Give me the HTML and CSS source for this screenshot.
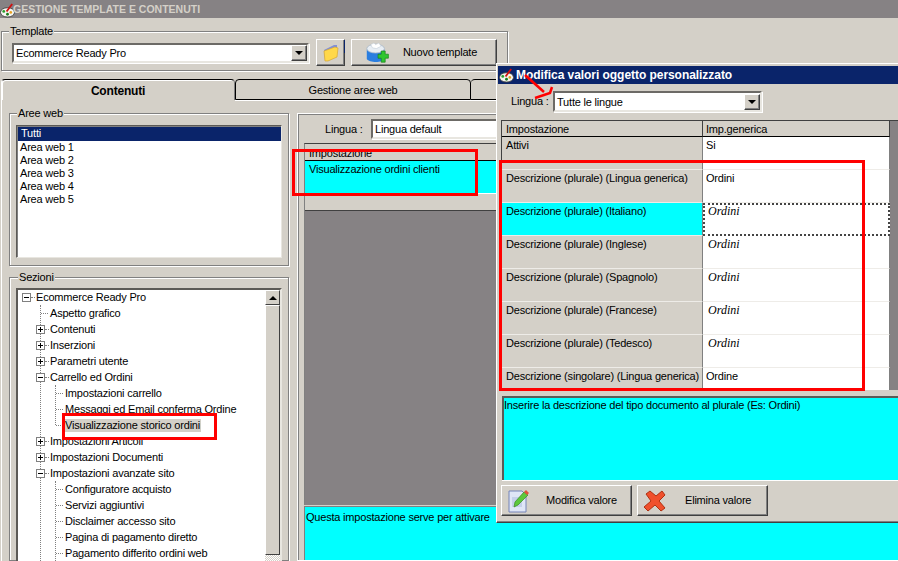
FILE: index.html
```html
<!DOCTYPE html>
<html lang="it">
<head>
<meta charset="utf-8">
<title>Gestione template e contenuti</title>
<link rel="stylesheet" href="styles.css">
</head>
<body>
<div class="main">
  <header class="app-title">
    <svg class="app-icon" viewBox="0 0 16 16"><ellipse cx="8" cy="10" rx="7.5" ry="5" fill="#f4f4f0" stroke="#444"/><circle cx="4" cy="9" r="1.5" fill="#2c9c2c"/><circle cx="8" cy="12" r="1.5" fill="#1c7c1c"/><circle cx="11.5" cy="10" r="1.4" fill="#e8a020"/><path d="M7 9 13 1" stroke="#d01010" stroke-width="2"/></svg>
    <span>GESTIONE TEMPLATE E CONTENUTI</span>
  </header>

  <fieldset class="group template-group">
    <legend>Template</legend>
    <div class="template-row">
      <div class="combo combo-template"><span class="combo-text">Ecommerce Ready Pro</span><span class="combo-btn"></span></div>
      <button class="btn btn-folder" type="button">
        <svg width="16" height="18" viewBox="0 0 16 18"><path d="M1 6 11 1h3v11L4 17H2z" fill="#7f8fd8"/><path d="M1 7 12 3l3 1-1 9-9 4H2z" fill="#ffd84a" stroke="#d8a830" stroke-width=".7"/></svg>
      </button>
      <button class="btn btn-new" type="button">
        <svg width="24" height="22" viewBox="0 0 30 27"><path d="M1 9v12c3 5 20 5 22 0V9z" fill="#2a7ee0"/><ellipse cx="12" cy="8" rx="11" ry="5.5" fill="#e8eef4" stroke="#a8b8c8"/><path d="M6 3l4-2 2 2 4-2 3 4-6 3-5-1z" fill="#fff" stroke="#b8c4d0" stroke-width=".6"/><path d="M15 15h4v-4h5v4h4v5h-4v5h-5v-5h-4z" fill="#2fc62f" stroke="#167a16" stroke-width=".8"/></svg>
        <span class="btn-label">Nuovo template</span>
      </button>
    </div>
  </fieldset>

  <nav class="tabs">
    <div class="tab tab-active">Contenuti</div>
    <div class="tab tab-second">Gestione aree web</div>
    <div class="tab tab-third"></div>
  </nav>

  <section class="page">
    <div class="left-col">
      <fieldset class="group areas-group">
        <legend>Aree web</legend>
        <ul class="listbox">
          <li class="list-selected">Tutti</li>
          <li>Area web 1</li>
          <li>Area web 2</li>
          <li>Area web 3</li>
          <li>Area web 4</li>
          <li>Area web 5</li>
        </ul>
      </fieldset>
      <fieldset class="group sections-group">
        <legend>Sezioni</legend>
        <div class="tree-box">
          <div class="tree">
            <div class="node root"><i class="exp minus"></i><i class="dash"></i><span>Ecommerce Ready Pro</span></div>
            <div class="branch">
              <div class="node"><i class="dash dash-long"></i><span>Aspetto grafico</span></div>
              <div class="node"><i class="exp plus"></i><i class="dash"></i><span>Contenuti</span></div>
              <div class="node"><i class="exp plus"></i><i class="dash"></i><span>Inserzioni</span></div>
              <div class="node"><i class="exp plus"></i><i class="dash"></i><span>Parametri utente</span></div>
              <div class="node"><i class="exp minus"></i><i class="dash"></i><span>Carrello ed Ordini</span></div>
              <div class="sub">
                <div class="node"><i class="dash dash-long"></i><span>Impostazioni carrello</span></div>
                <div class="node"><i class="dash dash-long"></i><span>Messaggi ed Email conferma Ordine</span></div>
                <div class="node node-last"><i class="dash dash-long"></i><span class="tree-selected">Visualizzazione storico ordini</span></div>
              </div>
              <div class="node"><i class="exp plus"></i><i class="dash"></i><span>Impostazioni Articoli</span></div>
              <div class="node"><i class="exp plus"></i><i class="dash"></i><span>Impostazioni Documenti</span></div>
              <div class="node"><i class="exp minus"></i><i class="dash"></i><span>Impostazioni avanzate sito</span></div>
              <div class="sub">
                <div class="node"><i class="dash dash-long"></i><span>Configuratore acquisto</span></div>
                <div class="node"><i class="dash dash-long"></i><span>Servizi aggiuntivi</span></div>
                <div class="node"><i class="dash dash-long"></i><span>Disclaimer accesso sito</span></div>
                <div class="node"><i class="dash dash-long"></i><span>Pagina di pagamento diretto</span></div>
                <div class="node"><i class="dash dash-long"></i><span>Pagamento differito ordini web</span></div>
              </div>
            </div>
          </div>
          <div class="scrollbar">
            <div class="scroll-up"></div>
            <div class="scroll-thumb"></div>
            <div class="scroll-track"></div>
          </div>
        </div>
      </fieldset>
    </div>

    <div class="right-panel">
      <div class="lang-row">
        <span class="lang-label">Lingua :</span>
        <div class="combo combo-lang"><span class="combo-text">Lingua default</span></div>
      </div>
      <div class="back-grid">
        <div class="back-head">Impostazione</div>
        <div class="back-row">Visualizzazione ordini clienti</div>
        <div class="back-empty"></div>
        <div class="back-dark"></div>
      </div>
      <div class="back-help">Questa impostazione serve per attivare</div>
    </div>
  </section>
</div>

<aside class="dialog">
  <div class="dlg-title">
    <svg class="app-icon" viewBox="0 0 16 16"><ellipse cx="8" cy="10" rx="7.5" ry="5" fill="#f4f4f0" stroke="#444"/><circle cx="4" cy="9" r="1.5" fill="#2c9c2c"/><circle cx="8" cy="12" r="1.5" fill="#1c7c1c"/><circle cx="11.5" cy="10" r="1.4" fill="#e8a020"/><path d="M7 9 13 1" stroke="#d01010" stroke-width="2"/></svg>
    <span>Modifica valori oggetto personalizzato</span>
  </div>
  <div class="dlg-lang">
    <span class="dlg-lang-label">Lingua :</span>
    <div class="combo combo-dlg"><span class="combo-text">Tutte le lingue</span><span class="combo-btn"></span></div>
  </div>
  <div class="grid-wrap">
    <div class="grid">
      <div class="cell head">Impostazione</div><div class="cell head head-value">Imp.generica</div>
      <div class="cell name first">Attivi</div><div class="cell value first">Si</div>
      <div class="cell name">Descrizione (plurale) (Lingua generica)</div><div class="cell value">Ordini</div>
      <div class="cell name active">Descrizione (plurale) (Italiano)</div><div class="cell value italic focus">Ordini</div>
      <div class="cell name">Descrizione (plurale) (Inglese)</div><div class="cell value italic">Ordini</div>
      <div class="cell name">Descrizione (plurale) (Spagnolo)</div><div class="cell value italic">Ordini</div>
      <div class="cell name">Descrizione (plurale) (Francese)</div><div class="cell value italic">Ordini</div>
      <div class="cell name">Descrizione (plurale) (Tedesco)</div><div class="cell value italic">Ordini</div>
      <div class="cell name last">Descrizione (singolare) (Lingua generica)</div><div class="cell value last">Ordine</div>
    </div>
  </div>
  <div class="dlg-help">Inserire la descrizione del tipo documento al plurale (Es: Ordini)</div>
  <div class="dlg-actions">
    <button class="btn btn-action" type="button">
      <svg width="24" height="24" viewBox="0 0 24 24"><path d="M2 2h13l4 4v17H2z" fill="#dfe6f6" stroke="#7484b8"/><path d="M5 8h10v10H5z" fill="#c4d0ea"/><path d="M7 18l1-5 9-10 4 3-10 10z" fill="#5cc83c" stroke="#388a24" stroke-width=".7"/><path d="M17 3l2-2 3 3-2 2z" fill="#e0503c"/></svg>
      <span class="action-label">Modifica valore</span>
    </button>
    <button class="btn btn-action" type="button">
      <svg width="24" height="24" viewBox="0 0 24 24"><path d="M3 5l4-3 6 5 6-5 3 4-6 6 6 7-4 3-6-6-7 6-4-4 7-6z" fill="#f0502c" stroke="#b03010"/></svg>
      <span class="action-label action-label-del">Elimina valore</span>
    </button>
  </div>
</aside>

<div class="mark mark-tree"></div>
<div class="mark mark-back"></div>
<div class="mark mark-grid"></div>
<svg class="mark-arrow" width="40" height="32" viewBox="0 0 40 32"><path d="M1 1 20 18M28 13 26 19 11 24" fill="none" stroke="#f00" stroke-width="2.5"/></svg>
</body>
</html>
```
FILE: styles.css
```css
* { box-sizing: border-box; }
html, body { margin: 0; height: 561px; overflow: hidden; }
body {
  width: 898px;
  position: relative;
  background: #d4d0c8;
  color: #000;
  font: 11px/13px "Liberation Sans", Arial, sans-serif;
  letter-spacing: -.2px;
}
.main { display: flex; flex-direction: column; height: 561px; }

.app-title {
  height: 18px;
  background: #868284;
  color: #d4d0c8;
  font-weight: bold;
  font-size: 10.5px;
  letter-spacing: 0;
  display: flex;
  align-items: center;
}
.app-icon { width: 15px; height: 15px; flex: none; margin-top: 3px; margin-right: -2px; }

.group {
  margin: 0;
  padding: 0;
  min-width: 0;
  border: 1px solid #808080;
  box-shadow: inset 1px 1px #fff, 1px 1px #fff;
}
.group legend {
  padding: 0 1px;
  line-height: 13px;
  background: #d4d0c8;
}

.template-group {
  width: 507px;
  height: 46px;
  margin: 7px 0 0 1px;
  padding: 1px 10px 0;
  flex: none;
}
.template-group legend { margin-left: -3px; }
.template-row { display: flex; align-items: center; height: 27px; }

.combo {
  display: flex;
  align-items: center;
  height: 20px;
  background: #fff;
  border: 2px solid;
  border-color: #6c6a66 #e8e6e0 #e8e6e0 #6c6a66;
  box-shadow: 1px 1px #fff;
}
.combo-text { flex: 1; padding: 1px 0 0 2px; white-space: nowrap; }
.combo-btn {
  width: 16px;
  height: 16px;
  flex: none;
  background: #d4d0c8;
  border: 1px solid;
  border-color: #fff #404040 #404040 #fff;
  box-shadow: inset -1px -1px #808080;
  position: relative;
}
.combo-btn::after {
  content: "";
  position: absolute;
  left: 3px;
  top: 5px;
  border: 4px solid transparent;
  border-top: 4px solid #000;
  border-bottom: 0;
}
.combo-template { width: 297px; }

.btn {
  display: flex;
  align-items: center;
  margin: 0;
  padding: 0;
  font: inherit;
  letter-spacing: inherit;
  color: #000;
  background: #d4d0c8;
  border: 1px solid;
  border-color: #fff #404040 #404040 #fff;
  box-shadow: inset -1px -1px #808080;
}
.btn-folder {
  position: relative;
  width: 29px;
  height: 27px;
  margin-left: 7px;
  justify-content: center;
}
.btn-folder::after {
  content: "";
  position: absolute;
  right: -1px;
  top: 0;
  width: 1px;
  height: 13px;
  background: #0a246a;
}
.btn-new { width: 146px; height: 27px; margin-left: 6px; padding: 0 9px 0 14px; }
.btn-label { margin-left: 3px; flex: 1; text-align: center; white-space: nowrap; }

.tabs { display: flex; height: 21px; margin: 8px 0 0 1px; flex: none; }
.tab {
  height: 21px;
  text-align: center;
  line-height: 20px;
  border-top: 1px solid #000;
  border-right: 1px solid #000;
  border-radius: 4px 4px 0 0;
}
.tab-active {
  width: 234px;
  font-weight: bold;
  font-size: 12px;
  padding-top: 1px;
  border-left: 1px solid #fff;
  border-right-color: #808080;
  box-shadow: inset 1px 1px #fff;
}
.tab-second {
  width: 236px;
  border-left: 1px solid #000;
  border-bottom: 1px solid #000;
  box-shadow: 0 1px #fff;
}
.tab-third {
  width: 60px;
  border-bottom: 1px solid #000;
  box-shadow: 0 1px #fff;
}

.page {
  flex: 1;
  display: flex;
  gap: 8px;
  min-height: 0;
  margin-left: 1px;
  padding: 7px 0 0 7px;
  border-left: 1px solid #fff;
  overflow: hidden;
}

.left-col { width: 280px; flex: none; display: flex; flex-direction: column; gap: 5px; }
.areas-group { height: 159px; padding: 1px 6px 0; flex: none; }
.areas-group legend { margin-left: 1px; }
.listbox {
  height: 133px;
  margin: 4px 0 0;
  padding: 1px 0 0 1px;
  list-style: none;
  background: #fff;
  border: 1px solid;
  border-color: #5c5a56 #e8e6e0 #e8e6e0 #5c5a56;
  box-shadow: inset 1px 1px #808080;
}
.listbox li { height: 13px; padding-left: 2px; white-space: nowrap; }
.listbox .list-selected { height: 14px; background: #0a246a; color: #fff; padding: 0 0 0 3px; }

.sections-group { flex: 1; min-height: 0; height: 300px; padding: 4px 6px 0; }
.sections-group legend { margin-left: 2px; }
.tree-box {
  height: 300px;
  display: flex;
  background: #fff;
  border: 2px solid;
  border-color: #5c5a56 #e8e6e0 #e8e6e0 #5c5a56;
}
.tree { flex: 1; margin-top: -1px; padding-left: 4px; overflow: hidden; }
.node { display: flex; align-items: center; height: 16px; white-space: nowrap; position: relative; }
.branch { margin-left: 18px; border-left: 1px dotted #808080; }
.sub { margin-left: 14px; border-left: 1px dotted #808080; }
.node-last::before {
  content: "";
  position: absolute;
  left: -1px;
  top: 8px;
  bottom: 0;
  width: 1px;
  background: #fff;
}
.exp {
  width: 9px;
  height: 9px;
  flex: none;
  border: 1px solid #808080;
  background: #fff;
  position: relative;
}
.exp::before {
  content: "";
  position: absolute;
  left: 1px;
  top: 3px;
  width: 5px;
  height: 1px;
  background: #000;
}
.plus::after {
  content: "";
  position: absolute;
  left: 3px;
  top: 1px;
  width: 1px;
  height: 5px;
  background: #000;
}
.branch > .node > .exp { margin-left: -5px; }
.dash { width: 4px; height: 0; flex: none; border-top: 1px dotted #808080; margin-right: 1px; }
.dash-long { width: 7px; margin-right: 2px; }
.tree-selected { background: #d4d0c8; margin-left: -1px; padding: 0 1px; }

.scrollbar {
  width: 15px;
  flex: none;
  display: flex;
  flex-direction: column;
  background: #e8e6e0;
}
.scroll-up {
  height: 15px;
  flex: none;
  background: #d4d0c8;
  border: 1px solid;
  border-color: #fff #404040 #404040 #fff;
  position: relative;
}
.scroll-up::after {
  content: "";
  position: absolute;
  left: 3px;
  top: 5px;
  border: 4px solid transparent;
  border-bottom: 4px solid #000;
  border-top: 0;
}
.scroll-thumb {
  height: 250px;
  flex: none;
  background: #d4d0c8;
  border: 1px solid;
  border-color: #fff #404040 #404040 #fff;
}
.scroll-track { flex: 1; background: repeating-conic-gradient(#d4d0c8 0 25%, #fff 0 50%) 0 0 / 2px 2px; }

.right-panel {
  flex: 1;
  min-width: 0;
  display: flex;
  flex-direction: column;
  margin-top: 6px;
  padding: 5px 0 0 6px;
  border: 1px solid #fff;
  border-right: 0;
  box-shadow: inset 1px 1px #808080;
}
.lang-row { display: flex; align-items: center; height: 20px; flex: none; }
.lang-label { margin-left: 21px; width: 46px; }
.combo-lang { width: 300px; }
.back-grid {
  flex: 1;
  display: flex;
  flex-direction: column;
  margin-top: 4px;
  border-top: 1px solid #404040;
  border-left: 1px solid #808080;
}
.back-head { height: 17px; padding: 3px 0 0 4px; border-bottom: 1px solid #000; flex: none; }
.back-row { height: 33px; padding: 2px 0 0 4px; background: #0ff; border-bottom: 1px solid #fff; flex: none; }
.back-empty { height: 16px; flex: none; }
.back-dark { flex: 1; background: #868284; border-top: 1px solid #404040; }
.back-help {
  height: 54px;
  margin-top: 1px;
  padding: 4px 0 0 1px;
  background: #0ff;
  border-top: 1px solid #808080;
  border-left: 1px solid #808080;
  flex: none;
  white-space: nowrap;
}

.dialog {
  position: absolute;
  left: 496px;
  top: 63px;
  width: 402px;
  height: 460px;
  display: flex;
  flex-direction: column;
  background: #d4d0c8;
  padding: 3px 0 0 1px;
  border-top: 1px solid #fff;
  border-left: 1px solid #fff;
  border-bottom: 1px solid #404040;
  box-shadow: inset 0 -1px #808080;
}
.dlg-title {
  height: 18px;
  flex: none;
  margin-top: -1px;
  padding-left: 1px;
  display: flex;
  align-items: center;
  gap: 2px;
  background: #0a246a;
  color: #fff;
  font-weight: bold;
  font-size: 12px;
  letter-spacing: -.05px;
}
.dlg-title .app-icon { margin: 0; }
.dlg-lang { display: flex; align-items: center; height: 21px; margin-top: 7px; flex: none; }
.dlg-lang-label { margin-left: 13px; width: 42px; }
.combo-dlg { width: 209px; height: 21px; }
.grid-wrap {
  height: 270px;
  margin: 8px 0 0 3px;
  flex: none;
  background: #868284;
  border-top: 1px solid #404040;
  border-left: 1px solid #404040;
  overflow: hidden;
}
.grid {
  display: grid;
  width: 388px;
  grid-template-columns: 201px 187px;
  grid-template-rows: 16px repeat(7, 33px) 23px;
}
.cell {
  padding: 2px 0 0 3px;
  border-bottom: 1px solid #eeece8;
  border-right: 1px solid #808080;
  white-space: nowrap;
  overflow: hidden;
}
.head { padding: 2px 0 0 4px; background: #d4d0c8; border-bottom-color: #000; border-right-color: #404040; }
.head-value { padding-left: 3px; }
.name { background: #d4d0c8; padding-left: 4px; }
.value { background: #fff; padding-left: 3px; }
.active { background: #0ff; }
.italic { font: italic 12px/13px "Liberation Serif", serif; letter-spacing: 0; padding-left: 5px; }
.focus { border: 2px dotted #444; padding: 0 0 0 3px; }
.last { border-bottom: 0; }
.dlg-help {
  height: 84px;
  margin: 6px 0 0 4px;
  padding: 1px 0 0 0;
  flex: none;
  background: #0ff;
  border-top: 2px solid #5c5a56;
  border-left: 2px solid #5c5a56;
  box-shadow: 0 1px #fff;
  white-space: nowrap;
}
.dlg-actions { display: flex; gap: 5px; margin: 5px 0 0 3px; }
.btn-action { width: 131px; height: 31px; padding-left: 5px; }
.action-label { margin-left: 15px; white-space: nowrap; }
.action-label-del { margin-left: 18px; }

.mark { position: absolute; border: 3px solid #f00; }
.mark-tree { left: 62px; top: 413px; width: 155px; height: 27px; }
.mark-back { left: 292px; top: 149px; width: 186px; height: 47px; }
.mark-grid { left: 499px; top: 160px; width: 366px; height: 231px; }
.mark-arrow { position: absolute; left: 524px; top: 74px; }
```
